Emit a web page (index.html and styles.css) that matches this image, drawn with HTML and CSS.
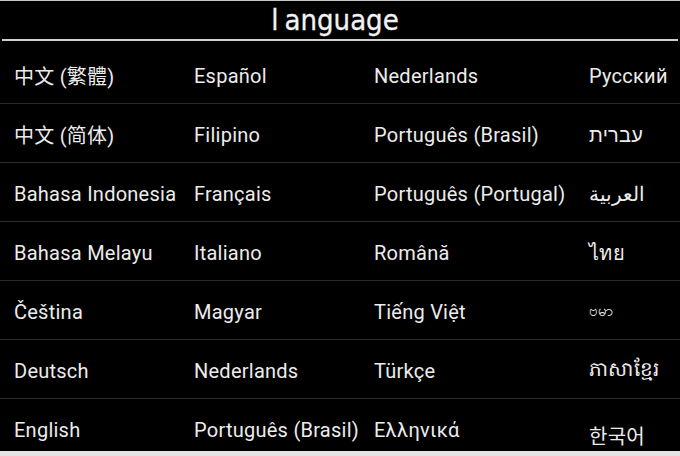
FILE: index.html
```html
<!DOCTYPE html>
<html>
<head>
<meta charset="utf-8">
<link rel="stylesheet" href="styles.css">
</head>
<body>
<div class="screen">
  <header class="title"><span class="l">l</span>anguage</header>
  <div class="list">
    <div class="row"><span>中文 (繁體)</span><span>Español</span><span>Nederlands</span><span>Русский</span></div>
    <div class="row"><span>中文 (简体)</span><span>Filipino</span><span>Português (Brasil)</span><span>עברית</span></div>
    <div class="row"><span>Bahasa Indonesia</span><span>Français</span><span>Português (Portugal)</span><span>العربية</span></div>
    <div class="row"><span>Bahasa Melayu</span><span>Italiano</span><span>Română</span><span>ไทย</span></div>
    <div class="row"><span>Čeština</span><span>Magyar</span><span>Tiếng Việt</span><span class="my">ဗမာ</span></div>
    <div class="row"><span>Deutsch</span><span>Nederlands</span><span>Türkçe</span><span class="km">ភាសាខ្មែរ</span></div>
    <div class="row last"><span>English</span><span>Português (Brasil)</span><span>Ελληνικά</span><span class="ko">한국어</span></div>
  </div>
</div>
</body>
</html>
```

FILE: styles.css
```css
html, body {
  margin: 0;
  padding: 0;
  background: #000;
}
.screen {
  width: 680px;
  height: 456px;
  box-sizing: border-box;
  border-top: 1px solid #c8c8c8;
  border-bottom: 5px solid #e4e4e4;
  background: #000;
  color: #ececec;
  font-family: Roboto, "Noto Sans", "Noto Sans CJK SC", sans-serif;
  display: flex;
  flex-direction: column;
  overflow: hidden;
}
.title {
  height: 38px;
  margin: 0 2px;
  border-bottom: 2px solid #d0d0d0;
  text-align: center;
  font-family: "DejaVu Sans Condensed", "DejaVu Sans", sans-serif;
  font-size: 29px;
  line-height: 38px;
  color: #f2f2f2;
  padding-right: 10px;
  -webkit-text-stroke: 0.3px #f2f2f2;
}
.title .l {
  margin-right: 6px;
}
.list {
  padding-top: 4px;
}
.row {
  display: grid;
  grid-template-columns: 180px 180px 215px 1fr;
  align-items: center;
  height: 58px;
  padding-left: 14px;
  border-bottom: 1px solid #2a2a2a;
  font-size: 20px;
  letter-spacing: 0.25px;
  white-space: nowrap;
}
.row span {
  padding-top: 3px;
}
.row.last {
  border-bottom: none;
}
.ko {
  font-family: "Noto Sans CJK KR", sans-serif;
  position: relative;
  top: 6px;
}
.my {
  font-size: 15px;
}
```
